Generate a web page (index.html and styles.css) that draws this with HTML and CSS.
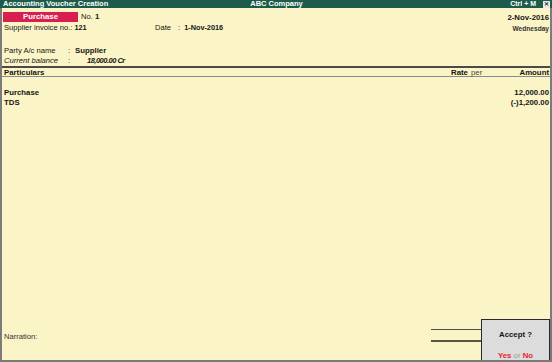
FILE: index.html
```html
<!DOCTYPE html>
<html>
<head>
<meta charset="utf-8">
<link rel="stylesheet" href="styles.css">
</head>
<body>
<div class="window">
  <div class="titlebar">
    <div class="t-left">Accounting Voucher Creation</div>
    <div class="t-center">ABC Company</div>
    <div class="t-right"><span>Ctrl + M</span><span class="close">&#x2715;</span></div>
  </div>

  <div class="head">
    <div class="row row1">
      <div class="vtype">Purchase</div>
      <div class="vno">No. <b>1</b></div>
      <div class="grow"></div>
      <div class="vdate">2-Nov-2016</div>
    </div>
    <div class="row row2">
      <div class="inv">Supplier invoice no.: <b class="num">121</b></div>
      <div class="date">Date<span class="colon">:</span><b class="num">1-Nov-2016</b></div>
      <div class="grow"></div>
      <div class="day">Wednesday</div>
    </div>
    <div class="row party">
      <div class="lbl">Party A/c name</div>
      <div class="colon2">:</div>
      <div class="val"><b>Supplier</b></div>
    </div>
    <div class="row bal">
      <div class="lbl"><i>Current balance</i></div>
      <div class="colon2">:</div>
      <div class="val balv"><b><i>18,000.00 Cr</i></b></div>
    </div>
  </div>

  <div class="colhead">
    <div class="c-part">Particulars</div>
    <div class="c-rate">Rate</div>
    <div class="c-per">per</div>
    <div class="c-amt">Amount</div>
  </div>

  <div class="entries">
    <div class="entry"><span>Purchase</span><span>12,000.00</span></div>
    <div class="entry"><span>TDS</span><span>(-)1,200.00</span></div>
  </div>

  <div class="footer">
    <div class="narr">Narration:</div>
    <div class="totals">
      <div class="tl1"></div>
      <div class="tl2"></div>
    </div>
    <div class="accept">
      <div class="acc-q">Accept ?</div>
      <div class="acc-a"><span class="red">Yes</span> <span class="or">or</span> <span class="red">No</span></div>
    </div>
  </div>
</div>
</body>
</html>
```

FILE: styles.css
```css
* { box-sizing: border-box; }
html, body { margin: 0; padding: 0; }
body {
  width: 552px;
  height: 362px;
  font-family: "Liberation Sans", Arial, sans-serif;
  font-size: 7.6px;
  color: #141414;
  background: #ffffff;
  overflow: hidden;
}
b { font-size: 7.8px; }
.window {
  width: 552px;
  height: 362px;
  display: flex;
  flex-direction: column;
  background: #fbf4c7;
  border-left: 2px solid #7b7b7b;
  border-right: 2px solid #7b7b7b;
  border-bottom: 2px solid #7b7b7b;
}
.titlebar {
  height: 8px;
  margin: 0 -2px;
  background: #1d5b4b;
  color: #ffffff;
  font-weight: bold;
  font-size: 7.5px;
  line-height: 8px;
  display: grid;
  grid-template-columns: 1fr auto 1fr;
  padding: 0 2px 0 3px;
}
.t-center { text-align: center; }
.t-right { display: flex; justify-content: flex-end; align-items: center; gap: 7px; font-size: 7px; }
.close {
  width: 7px;
  height: 7px;
  background: #e9e9e9;
  color: #333;
  font-size: 6px;
  line-height: 7px;
  text-align: center;
  font-weight: bold;
}
.head { padding: 4px 1px 0 1px; }
.row { display: flex; align-items: center; height: 10px; line-height: 10px; }
.grow { flex: 1; }
.vtype {
  width: 75px;
  height: 10px;
  background: #d7204f;
  color: #fff;
  font-weight: bold;
  font-size: 7.8px;
  text-align: center;
}
.vno { margin-left: 3px; }
.vdate { font-weight: bold; font-size: 7.8px; transform: translateY(1px); }
.row2 { margin-top: 1px; padding-left: 1px; }
.inv { width: 151px; }
.num { font-size: 7.3px; }
.colon { margin: 0 4px 0 7px; }
.day { font-size: 6.6px; color: #333; font-weight: bold; transform: translateY(1px); }
.party { margin-top: 13px; padding-left: 1px; }
.bal { padding-left: 1px; }
.lbl { width: 64px; }
.colon2 { width: 7px; }
.balv { margin-left: 12px; }
.balv b { letter-spacing: -0.5px; font-size: 7.5px; }
.colhead {
  display: flex;
  height: 11px;
  line-height: 10px;
  border-top: 2px solid #4a4a4a;
  border-bottom: 1px solid #8a8a8a;
  font-weight: bold;
  font-size: 7.8px;
  padding: 0 1px 0 2px;
}
.c-part { flex: 1; }
.c-rate { width: 20px; }
.c-per { width: 38px; font-weight: normal; color: #444; }
.c-amt { width: 40px; text-align: right; }
.entries { padding: 11px 1px 0 2px; font-weight: bold; font-size: 7.8px; }
.entry { display: flex; justify-content: space-between; height: 10px; line-height: 10px; }
.footer {
  margin-top: auto;
  display: flex;
  align-items: flex-end;
  padding-left: 2px;
}
.narr { flex: 1; margin-bottom: 19px; color: #333; }
.totals { width: 50px; margin-bottom: 18px; }
.tl1 { height: 1px; background: #4e4e4e; }
.tl2 { height: 2px; background: #58563e; margin-top: 10px; }
.accept {
  width: 69px;
  height: 41px;
  background: #dcdcdc;
  border-top: 1px solid #2a2a2a;
  border-left: 1px solid #2a2a2a;
  border-right: 1px solid #2a2a2a;
  text-align: center;
  font-weight: bold;
  font-size: 7.8px;
}
.acc-q { margin-top: 10px; line-height: 10px; }
.acc-a { margin-top: 11px; line-height: 10px; }
.red { color: #e8232e; }
.or { color: #9a9a9a; font-weight: normal; }
```
